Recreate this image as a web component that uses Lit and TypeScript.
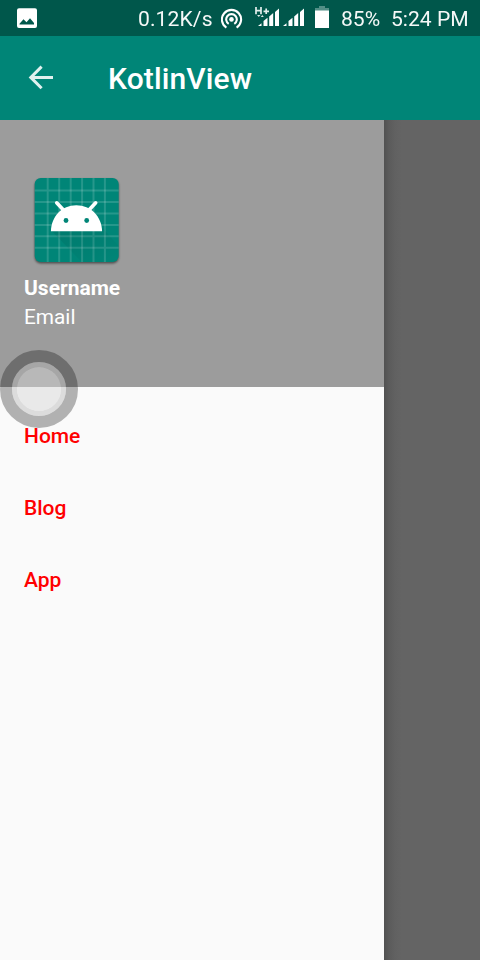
import { LitElement, html, css, svg } from "lit";
import { customElement, property } from "lit/decorators.js";

@customElement("status-bar")
class StatusBar extends LitElement {
  static styles = css`
    :host { display: flex; align-items: center; height: 36px; background: #00574b; color: #fff; font: 400 21.1px/36px Roboto, sans-serif; white-space: pre; }
    svg { display: block; flex: none; }
    .photo { margin-left: 17px; }
    .speed { margin-left: 101px; width: 83px; letter-spacing: 0.1px; }
    .signals { margin-left: 11px; }
    .battery { margin-left: 10px; }
    .percent { margin-left: 11px; width: 50px; }
    span { padding-top: 2px; box-sizing: border-box; height: 36px; line-height: 34px; opacity: .96; }
  `;
  render() {
    return html`
      <svg class="photo" width="20" height="36" viewBox="0 0 20 36" fill="#fff">
        <path fill-rule="evenodd" d="M2 8.3h16a2 2 0 0 1 2 2V26a2 2 0 0 1-2 2H2a2 2 0 0 1-2-2V10.300a2 2 0 0 1 2-2ZM2.500 24.500h14.500v-1.500l-4-4.800-3.500 4-3-3-4 4.500Z"/>
      </svg>
      <span class="speed">0.12K/s</span>
      <svg width="22" height="36" viewBox="0 0 22 36" fill="none" stroke="#fff" stroke-width="2.100">
        <path d="M5.400 27.600a9.600 9.600 0 1 1 10.200 0M7.700 23.900a5.300 5.300 0 1 1 5.600 0"/>
        <circle cx="10.500" cy="19.400" r="2.300" fill="#fff" stroke="none"/>
      </svg>
      <svg class="signals" width="51" height="36" viewBox="254 0 51 36" fill="#fff">
        <path d="M256 7v7.300M261 7v7.300M256 10.600h5M263.500 11.300h5.500M266.200 8.500v5.600" fill="none" stroke="#e2eeec" stroke-width="1.700"/>
        <path d="M257 15h3.500l-1.700 2ZM260.800 17l1.500-2 1.500 2Z" opacity=".85"/>
        <path d="M258 26l3.500-2.800V26ZM263.500 26v-5l4-3.300V26ZM269.200 26v-9.600l4-3.300V26ZM275 26V12l4-3.400V26Z"/>
        <path d="M283 26l3.500-2.800V26ZM288.500 26v-5l4-3.300V26ZM294.200 26v-9.600l4-3.300V26ZM300 26V12l4-3.400V26Z"/>
      </svg>
      <svg class="battery" width="15" height="36" viewBox="0 0 15 36">
        <path d="M4 6h6v2h4v3H0V8h4Z" fill="#528e86"/><path d="M0 10.500h14V28H0Z" fill="#fff"/>
      </svg>
      <span class="percent">85%</span><span>5:24 PM</span>
    `;
  }
}

@customElement("app-toolbar")
class AppToolbar extends LitElement {
  @property() heading = "";
  static styles = css`
    :host { display: flex; align-items: center; height: 84px; background: #008577; color: #fff; }
    svg { margin-left: 28px; flex: none; }
    h1 { margin: 1px 0 0 54px; font: 500 30px/36px Roboto, sans-serif; letter-spacing: 0.12px; }
  `;
  render() {
    return html`
      <svg width="26" height="84" viewBox="0 0 26 84" fill="none" stroke="#e0f1ef" stroke-width="3">
        <path d="M25 41.400H3M13.600 30.600 2.800 41.400l10.800 10.800"/>
      </svg>
      <h1>${this.heading}</h1>
    `;
  }
}

const gridStops = [13, 24.5, 36, 47.4, 58.8, 70.2];

@customElement("nav-drawer")
class NavDrawer extends LitElement {
  static styles = css`
    :host { display: block; width: 384px; background: #fafafa; font-family: Roboto, sans-serif; }
    header { height: 267px; box-sizing: border-box; padding: 54px 24px 0; background: #9c9c9c; color: #fff; }
    .launcher { display: block; margin-left: 6px; }
    .name { margin-top: 6px; font: 700 21px/28px Roboto, sans-serif; }
    .mail { margin-top: 1px; font: 400 20.8px/28px Roboto, sans-serif; }
    nav { padding-top: 13px; }
    a { display: block; height: 72px; padding-left: 24px; color: #f00; font-size: 21px; font-weight: 500; line-height: 72px; }
  `;
  render() {
    return html`
      <header>
        <svg class="launcher" width="94" height="94" viewBox="-4.700 -4 94 94">
          <defs>
            <filter id="blur" x="-10%" y="-10%" width="120%" height="120%"><feGaussianBlur stdDeviation="1.300"/></filter>
            <linearGradient id="shade" x1="0" y1="0" x2="1" y2="1"><stop offset="0.200" stop-opacity=".07"/><stop offset="1" stop-opacity="0"/></linearGradient>
          </defs>
          <rect x="0" y="1.500" width="84" height="84" rx="6" opacity=".5" filter="url(#blur)"/>
          <rect width="84" height="84" rx="6" fill="#008577"/>
          <g stroke="#fff" stroke-opacity=".15" stroke-width="2">
            ${gridStops.map((p) => svg`<path d=${`M${p} 0V84M0 ${p - 0.5}H84`}/>`)}
          </g>
          <path d="M17 53 47 84H78q6 0 6-6V68L67 49Z" fill="url(#shade)"/>
          <path d="M22 24.800l6.500 7M61 24.800l-6.500 7" stroke="#fff" stroke-width="3.600" stroke-linecap="round"/>
          <path d="M16.200 53.300C16.600 38.500 27 27.300 41.600 27.300S67 38.500 67.400 53.300Z" fill="#fff"/>
          <circle cx="31.300" cy="42.500" r="2.400" fill="#008577"/><circle cx="52" cy="42.500" r="2.400" fill="#008577"/>
        </svg>
        <div class="name">Username</div>
        <div class="mail">Email</div>
      </header>
      <nav>${["Home", "Blog", "App"].map((label) => html`<a>${label}</a>`)}</nav>
    `;
  }
}

@customElement("app-root")
class AppRoot extends LitElement {
  static styles = css`
    :host { display: flex; flex-direction: column; position: relative; width: 480px; height: 960px; overflow: hidden; }
    .content { display: flex; flex: 1; }
    .scrim { flex: 1; background: linear-gradient(90deg, #515151, #5b5b5b 5px, #616161 11px, #646464 18px); }
    .touch { position: absolute; left: 0; top: 350px; width: 78px; height: 78px; }
  `;
  render() {
    return html`
      <status-bar></status-bar>
      <app-toolbar heading="KotlinView"></app-toolbar>
      <div class="content"><nav-drawer></nav-drawer><div class="scrim"></div></div>
      <svg class="touch" viewBox="0 0 78 78">
        <circle cx="39" cy="39" r="33" fill="none" stroke="#000" stroke-opacity=".29" stroke-width="12"/>
        <circle cx="39" cy="39" r="24.500" fill="none" stroke="#b4b4b4" stroke-opacity=".43" stroke-width="5"/>
        <circle cx="39" cy="39" r="22" fill="#d8d8d8" fill-opacity=".48"/>
      </svg>
    `;
  }
}
